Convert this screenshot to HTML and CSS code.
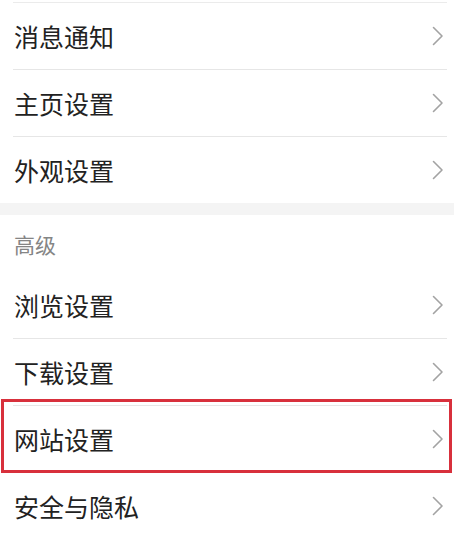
FILE: index.html
```html
<!DOCTYPE html>
<html lang="zh-CN">
<head>
<meta charset="utf-8">
<title>设置</title>
<link rel="stylesheet" href="styles.css">
</head>
<body>
<div class="page">
  <div class="stub"></div>
  <div class="group">
    <div class="row"><span class="label">消息通知</span><svg class="chev" viewBox="0 0 12 20" width="12" height="20"><polyline points="1.5,1.5 10,10 1.5,18.5"/></svg></div>
    <div class="row"><span class="label">主页设置</span><svg class="chev" viewBox="0 0 12 20" width="12" height="20"><polyline points="1.5,1.5 10,10 1.5,18.5"/></svg></div>
    <div class="row last"><span class="label">外观设置</span><svg class="chev" viewBox="0 0 12 20" width="12" height="20"><polyline points="1.5,1.5 10,10 1.5,18.5"/></svg></div>
  </div>
  <div class="band"></div>
  <div class="group">
    <div class="header">高级</div>
    <div class="row"><span class="label">浏览设置</span><svg class="chev" viewBox="0 0 12 20" width="12" height="20"><polyline points="1.5,1.5 10,10 1.5,18.5"/></svg></div>
    <div class="row"><span class="label">下载设置</span><svg class="chev" viewBox="0 0 12 20" width="12" height="20"><polyline points="1.5,1.5 10,10 1.5,18.5"/></svg></div>
    <div class="row marked"><span class="label">网站设置</span><svg class="chev" viewBox="0 0 12 20" width="12" height="20"><polyline points="1.5,1.5 10,10 1.5,18.5"/></svg></div>
    <div class="row"><span class="label">安全与隐私</span><svg class="chev" viewBox="0 0 12 20" width="12" height="20"><polyline points="1.5,1.5 10,10 1.5,18.5"/></svg></div>
  </div>
</div>
</body>
</html>
```
FILE: styles.css
```css
html, body {
  margin: 0;
  padding: 0;
  background: #ffffff;
}
body {
  font-family: "Noto Sans CJK SC", "Noto Sans", sans-serif;
  color: #222222;
  overflow: hidden;
}
.page {
  width: 454px;
  height: 538px;
  overflow: hidden;
}
.stub {
  height: 2px;
  margin: 0 7px 0 13px;
  border-bottom: 1px solid #ebebeb;
}
.group {
  display: flex;
  flex-direction: column;
}
.row {
  position: relative;
  display: flex;
  align-items: center;
  justify-content: space-between;
  height: 66px;
  margin: 0 7px 0 13px;
  border-bottom: 1px solid #e6e6e6;
}
.row.last {
  border-bottom: none;
}
.label {
  font-size: 25px;
  line-height: 1;
  padding-left: 1px;
}
.chev {
  margin-right: 3px;
  fill: none;
  stroke: #a3a3a3;
  stroke-width: 1.6;
  stroke-linecap: round;
  stroke-linejoin: round;
}
.band {
  height: 12px;
  background: #f4f4f4;
}
.header {
  height: 57px;
  display: flex;
  align-items: center;
  padding-left: 14px;
  font-size: 21px;
  color: #858585;
}
.marked::after {
  content: "";
  position: absolute;
  top: -7px;
  bottom: -1px;
  left: -12px;
  right: -5px;
  border: 3px solid #d8303c;
}
```
